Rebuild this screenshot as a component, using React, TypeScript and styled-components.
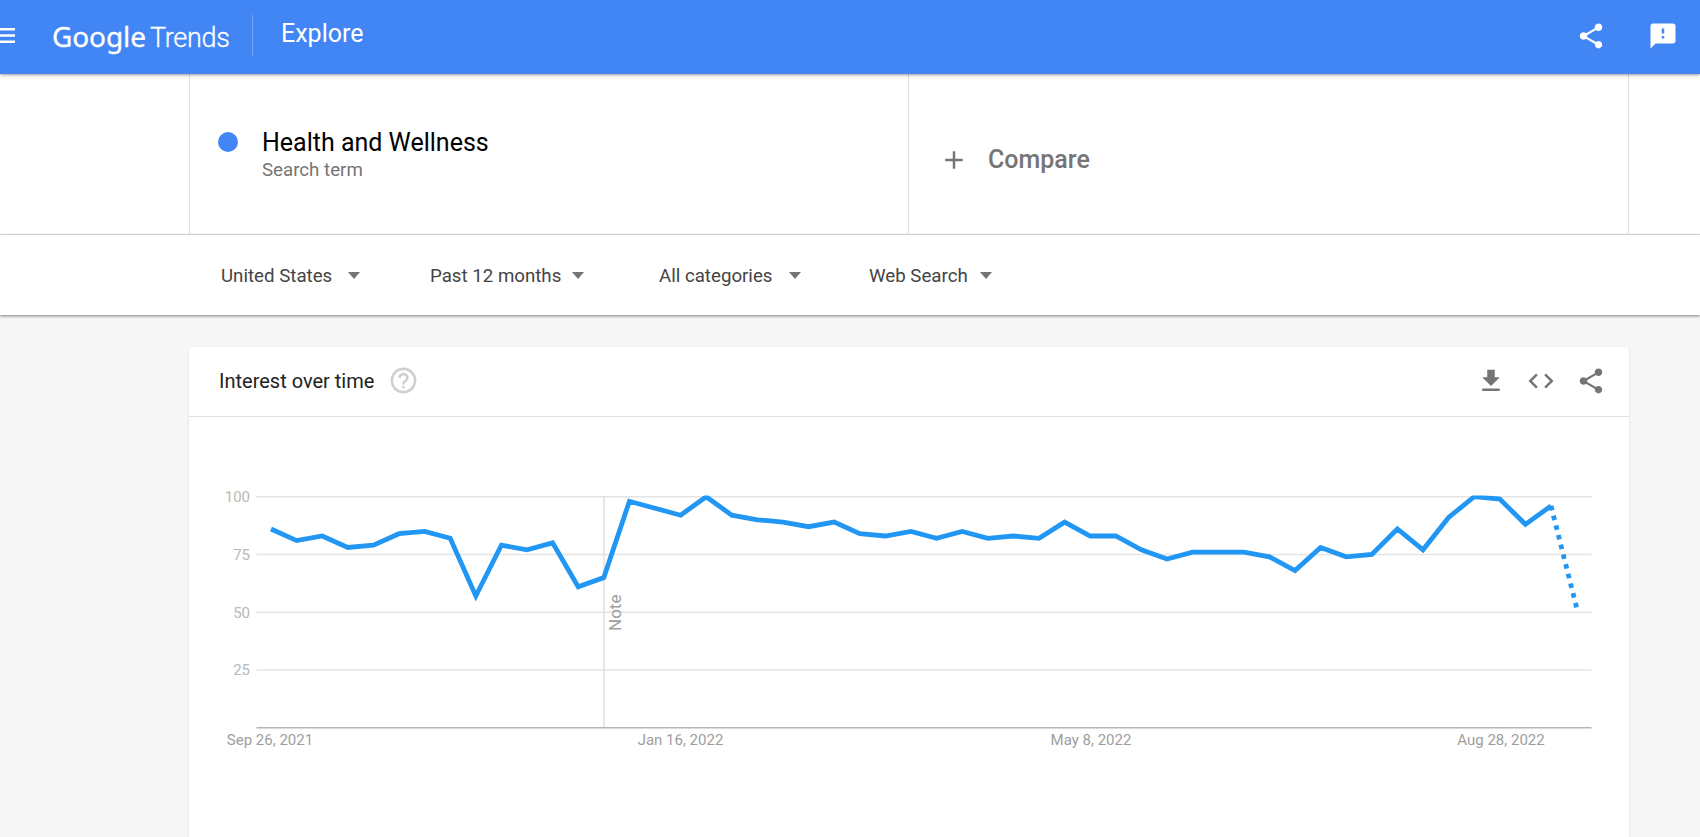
import React from "react";
import styled, { createGlobalStyle } from "styled-components";

const SHARE =
  "M18 16.08c-.76 0-1.44.3-1.96.77L8.91 12.7c.05-.23.09-.46.09-.7s-.04-.47-.09-.7l7.05-4.11c.54.5 1.25.81 2.04.81 1.66 0 3-1.34 3-3s-1.34-3-3-3-3 1.34-3 3c0 .24.04.47.09.7L8.04 9.81C7.5 9.31 6.79 9 6 9c-1.66 0-3 1.34-3 3s1.34 3 3 3c.79 0 1.5-.31 2.04-.81l7.12 4.16c-.05.21-.08.43-.08.65 0 1.61 1.31 2.92 2.92 2.92 1.61 0 2.92-1.31 2.92-2.92s-1.31-2.92-2.92-2.92z";
const FEEDBACK =
  "M20 2H4c-1.1 0-1.99.9-1.99 2L2 22l4-4h14c1.1 0 2-.9 2-2V4c0-1.1-.9-2-2-2zm-7 12h-2v-2h2v2zm0-4h-2V6h2v4z";
const DOWNLOAD = "M19 9h-4V3H9v6H5l7 7 7-7zM5 18v2h14v-2H5z";
const CODE =
  "M9.4 16.6L4.8 12l4.6-4.6L8 6l-6 6 6 6 1.4-1.4zm5.2 0l4.6-4.6-4.6-4.6L16 6l6 6-6 6-1.4-1.4z";
const HELP =
  "M11 18h2v-2h-2v2zm1-16C6.48 2 2 6.48 2 12s4.48 10 10 10 10-4.48 10-10S17.52 2 12 2zm0 18c-4.41 0-8-3.59-8-8s3.59-8 8-8 8 3.59 8 8-3.59 8-8 8zm0-14c-2.21 0-4 1.79-4 4h2c0-1.1.9-2 2-2s2 .9 2 2c0 2-3 1.75-3 5h2c0-2.25 3-2.5 3-5 0-2.21-1.79-4-4-4z";
const ADD = "M19 13h-6v6h-2v-6H5v-2h6V5h2v6h6v2z";

const filters = [
  { label: "United States", width: 209, gap: 16 },
  { label: "Past 12 months", width: 229, gap: 11 },
  { label: "All categories", width: 210, gap: 17 },
  { label: "Web Search", width: 130, gap: 12 },
];

const values = [
  86, 81, 83, 78, 79, 84, 85, 82, 57, 79, 77, 80, 61, 65, 98, 95, 92, 100, 92,
  90, 89, 87, 89, 84, 83, 85, 82, 85, 82, 83, 82, 89, 83, 83, 77, 73, 76, 76,
  76, 74, 68, 78, 74, 75, 86, 77, 91, 100, 99, 88, 96, 52,
];

const toX = (i: number) => 271 + i * 25.6;
const toY = (v: number) => 727.7 - 2.31 * v;
const toPoints = (list: number[], start: number) =>
  list.map((v, i) => `${toX(start + i).toFixed(1)},${toY(v).toFixed(1)}`).join(" ");

const solidPoints = toPoints(values.slice(0, 51), 0);
const dottedPoints = toPoints(values.slice(50), 50);

const yTicks = [100, 75, 50, 25];
const xTicks = [
  { label: "Sep 26, 2021", x: 270 },
  { label: "Jan 16, 2022", x: 680.5 },
  { label: "May 8, 2022", x: 1091 },
  { label: "Aug 28, 2022", x: 1501 },
];

const GlobalStyle = createGlobalStyle`
  html, body {
    margin: 0;
    padding: 0;
    height: 100%;
    overflow: hidden;
    background: #f7f7f7;
    font-family: Roboto, "Liberation Sans", sans-serif;
  }
`;

const Icon = ({ d, color, size }: { d: string; color: string; size?: number }) => (
  <IconSvg viewBox="0 0 24 24" $color={color} $size={size || 30}>
    <path d={d} />
  </IconSvg>
);

const App = () => {
  return (
    <Page>
      <GlobalStyle />
      <Header>
        <Hamburger viewBox="0 0 15 15">
          <path d="M0 0h15v2.5H0zM0 6.2h15v2.5H0zM0 12.4h15v2.5H0z" />
        </Hamburger>
        <Logo>
          <LogoGoogle>Google</LogoGoogle>
          <LogoTrends>Trends</LogoTrends>
        </Logo>
        <HeaderDivider />
        <PageTitle>Explore</PageTitle>
        <HeaderActions>
          <Icon d={SHARE} color="#fff" />
          <Icon d={FEEDBACK} color="#fff" />
        </HeaderActions>
      </Header>

      <SearchRow>
        <TermCell>
          <TermDot />
          <div>
            <TermName>Health and Wellness</TermName>
            <TermType>Search term</TermType>
          </div>
        </TermCell>
        <CompareCell>
          <Icon d={ADD} color="#757575" />
          <CompareLabel>Compare</CompareLabel>
        </CompareCell>
        <EmptyCell />
      </SearchRow>

      <FilterBar>
        {filters.map((item) => (
          <FilterItem key={item.label} $width={item.width} $gap={item.gap}>
            {item.label}
            <Caret />
          </FilterItem>
        ))}
      </FilterBar>

      <Card>
        <CardHeader>
          <CardTitle>Interest over time</CardTitle>
          <HelpWrap>
            <Icon d={HELP} color="#cfcfcf" size={31} />
          </HelpWrap>
          <CardActions>
            <Icon d={DOWNLOAD} color="#757575" />
            <Icon d={CODE} color="#757575" />
            <Icon d={SHARE} color="#757575" />
          </CardActions>
        </CardHeader>
        <Chart viewBox="189 417 1440 420">
          <defs>
            <clipPath id="plot-area">
              <rect x="256.5" y="495.5" width="1335" height="232" />
            </clipPath>
          </defs>
          {yTicks.map((tick) => (
            <g key={tick}>
              <line x1="256.5" x2="1591.5" y1={toY(tick)} y2={toY(tick)} stroke="#e4e4e4" strokeWidth="1.4" />
              <YLabel x="250" y={toY(tick) + 5.3}>
                {tick}
              </YLabel>
            </g>
          ))}
          <line x1="604" x2="604" y1="496.7" y2="727.7" stroke="#dcdcdc" strokeWidth="1.3" />
          <NoteLabel transform="translate(621 631) rotate(-90)">Note</NoteLabel>
          <line x1="256.5" x2="1591.5" y1="727.7" y2="727.7" stroke="#b5b5b5" strokeWidth="1.5" />
          {xTicks.map((tick) => (
            <XLabel key={tick.label} x={tick.x} y="745">
              {tick.label}
            </XLabel>
          ))}
          <g clipPath="url(#plot-area)">
            <polyline points={solidPoints} fill="none" stroke="#2196f3" strokeWidth="4.8" strokeLinejoin="miter" />
            <polyline points={dottedPoints} fill="none" stroke="#2196f3" strokeWidth="4.8" strokeDasharray="4.6 5.4" />
          </g>
        </Chart>
      </Card>
    </Page>
  );
};

const Page = styled.div`
  height: 837px;
  overflow: hidden;
  background: #f7f7f7;
`;

const Header = styled.header`
  position: relative;
  z-index: 2;
  display: flex;
  align-items: center;
  height: 74px;
  padding: 0 22px 3px 0;
  box-sizing: border-box;
  background: #4285f4;
  box-shadow: 0 1px 3px rgba(0, 0, 0, 0.4);
`;

const Hamburger = styled.svg`
  width: 15px;
  height: 15px;
  fill: #fff;
  flex: none;
`;

const Logo = styled.div`
  display: flex;
  align-items: baseline;
  margin-left: 37px;
  width: 200px;
  color: #fff;
  font-size: 28px;
`;

const LogoGoogle = styled.span`
  font-family: "Noto Sans", Roboto, sans-serif;
  letter-spacing: -0.1px;
  -webkit-text-stroke: 0.3px #fff;
`;

const LogoTrends = styled.span`
  margin-left: 4px;
  font-size: 27px;
  font-weight: 300;
  letter-spacing: -0.3px;
  -webkit-text-stroke: 0.3px #fff;
`;

const HeaderDivider = styled.div`
  width: 1px;
  height: 41px;
  background: rgba(255, 255, 255, 0.25);
`;

const PageTitle = styled.div`
  margin: -4px 0 0 28px;
  color: #fff;
  font-size: 25px;
`;

const HeaderActions = styled.div`
  display: flex;
  gap: 42px;
  margin-left: auto;
`;

const IconSvg = styled.svg<{ $color: string; $size: number }>`
  display: block;
  width: ${(p) => p.$size}px;
  height: ${(p) => p.$size}px;
  flex: none;
  fill: ${(p) => p.$color};
`;

const SearchRow = styled.div`
  display: grid;
  grid-template-columns: 719px 720px 1fr;
  height: 161px;
  box-sizing: border-box;
  padding-left: 189px;
  background: #fff;
  border-bottom: 1px solid #e0e0e0;
`;

const Cell = styled.div`
  display: flex;
  align-items: center;
  border-left: 1px solid #dedede;
`;

const TermCell = styled(Cell)`
  padding: 2px 0 0 28px;
  box-sizing: border-box;
`;

const CompareCell = styled(Cell)`
  padding: 11px 0 0 30px;
  box-sizing: border-box;
`;

const EmptyCell = styled(Cell)``;

const TermDot = styled.span`
  width: 20px;
  height: 20px;
  margin-right: 24px;
  margin-bottom: 26px;
  border-radius: 50%;
  background: #4285f4;
`;

const TermName = styled.div`
  color: #000;
  font-size: 25px;
  line-height: 30px;
`;

const TermType = styled.div`
  color: #757575;
  font-size: 18.7px;
  line-height: 25px;
`;

const CompareLabel = styled.div`
  margin-left: 19px;
  color: #757575;
  font-size: 25px;
  font-weight: 500;
`;

const FilterBar = styled.div`
  position: relative;
  display: flex;
  align-items: center;
  height: 80px;
  box-sizing: border-box;
  padding: 1px 0 0 221px;
  background: #fff;
  box-shadow: 0 1px 3px rgba(0, 0, 0, 0.5);
`;

const FilterItem = styled.div<{ $width: number; $gap: number }>`
  display: flex;
  align-items: center;
  flex: none;
  width: ${(p) => p.$width}px;
  gap: ${(p) => p.$gap}px;
  color: #444;
  font-size: 18.7px;
`;

const Caret = styled.span`
  width: 0;
  height: 0;
  border-left: 6.5px solid transparent;
  border-right: 6.5px solid transparent;
  border-top: 7px solid #757575;
`;

const Card = styled.section`
  width: 1440px;
  height: 490px;
  margin: 32px 0 0 189px;
  background: #fff;
  border-radius: 4px 4px 0 0;
  box-shadow: 0 1px 3px rgba(0, 0, 0, 0.12);
`;

const CardHeader = styled.div`
  display: flex;
  align-items: center;
  height: 70px;
  box-sizing: border-box;
  padding: 0 23px 2px 30px;
  border-bottom: 1px solid #e0e0e0;
`;

const CardTitle = styled.h2`
  margin: 0;
  color: #222;
  font-size: 20px;
  font-weight: 400;
`;

const HelpWrap = styled.div`
  margin-left: 14px;
`;

const CardActions = styled.div`
  display: flex;
  gap: 20px;
  margin-left: auto;
`;

const Chart = styled.svg`
  display: block;
  width: 1440px;
  height: 420px;
`;

const YLabel = styled.text`
  fill: #b8b8b8;
  font-size: 15px;
  text-anchor: end;
`;

const XLabel = styled.text`
  fill: #9e9e9e;
  font-size: 15px;
  text-anchor: middle;
`;

const NoteLabel = styled.text`
  fill: #9e9e9e;
  font-size: 17px;
`;

export default App;
